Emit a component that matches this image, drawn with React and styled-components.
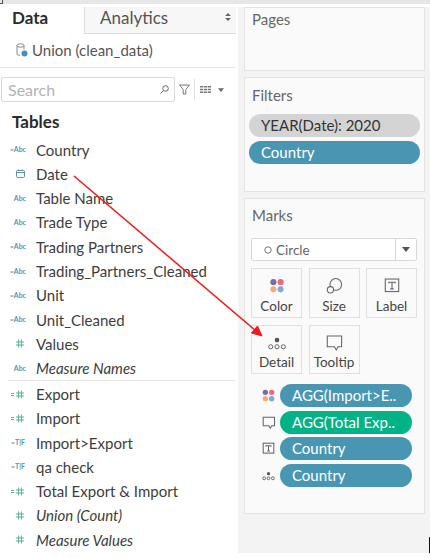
import React from "react";
import styled, { createGlobalStyle } from "styled-components";

const Global = createGlobalStyle`
  html, body { margin: 0; padding: 0; background: #fff; }
  * { box-sizing: border-box; }
`;

const Page = styled.div`
  position: relative;
  width: 430px;
  height: 558px;
  overflow: hidden;
  background: #fff;
  font-family: Lato, "Liberation Sans", sans-serif;
  color: #333;
`;
const TopStrip = styled.div`
  height: 4px;
  background: #e6e6e6;
  margin-bottom: 3px;
`;
const Corner = styled.div`
  position: absolute;
  left: 0;
  top: 0;
  width: 3px;
  height: 4px;
  border: solid #555;
  border-width: 0 1px 1px 0;
`;
const Main = styled.div`
  display: flex;
  height: 546px;
`;
const DataPane = styled.div`
  width: 236px;
  flex: none;
  display: flex;
  flex-direction: column;
  background: #fff;
`;
const Tabs = styled.div`
  display: flex;
  height: 27px;
  flex: none;
`;
const DataTab = styled.div`
  width: 84px;
  padding: 0 0 3px 12px;
  font-size: 17px;
  font-weight: 700;
  color: #2b2b2b;
  line-height: 22px;
`;
const AnalyticsTab = styled.div`
  flex: 1;
  position: relative;
  padding: 0 0 3px 15px;
  font-size: 17px;
  line-height: 22px;
  color: #555;
  background: #f7f7f7;
  border-left: 1px solid #dcdcdc;
  border-bottom: 1px solid #dcdcdc;
`;
const UpDown = styled.svg`
  position: absolute;
  right: 5px;
  top: 5px;
`;
const SourceRow = styled.div`
  height: 34px;
  flex: none;
  display: flex;
  align-items: center;
  padding: 0 0 2px 16px;
  gap: 4px;
  font-size: 15px;
  color: #555;
  border-bottom: 1px solid #e6e6e6;
`;
const SearchRow = styled.div`
  height: 34px;
  flex: none;
  display: flex;
  align-items: flex-start;
  padding: 9px 0 0 1px;
`;
const SearchBox = styled.div`
  width: 174px;
  height: 25px;
  border: 1px solid #d9d9d9;
  border-radius: 2px;
  display: flex;
  align-items: center;
  justify-content: space-between;
  padding: 0 5px 0 6px;
  font-size: 16px;
  color: #b3b3b3;
`;
const SearchTools = styled.div`
  display: flex;
  align-items: center;
  height: 25px;
  padding-left: 4px;
`;
const ToolDivider = styled.div`
  width: 1px;
  height: 21px;
  background: #e0e0e0;
  margin: 0 5px 0 4px;
`;
const Heading = styled.div`
  height: 35.4px;
  flex: none;
  padding: 9px 0 0 12px;
  font-size: 17px;
  line-height: 22px;
  font-weight: 700;
  color: #2b2b2b;
`;
const FieldGroup = styled.div`
  display: flex;
  flex-direction: column;
`;
const Row = styled.div`
  display: flex;
  align-items: center;
  height: 24.3px;
  font-size: 15px;
  font-style: ${(p) => (p.$italic ? "italic" : "normal")};
  color: #3d3d3d;
  white-space: nowrap;
`;
const IconSlot = styled.div`
  width: 36px;
  flex: none;
  display: flex;
  align-items: center;
  justify-content: flex-end;
  padding-right: 10px;
  font-style: normal;
`;
const TinyText = styled.span`
  font-size: ${(p) => p.$size || 7}px;
  font-weight: 700;
  line-height: 1;
  color: ${(p) => p.$color || "#5b93a8"};
  letter-spacing: 0;
`;
const Rule = styled.div`
  height: 1px;
  margin: 0 0 0.5px 8px;
  background: #e6e6e6;
`;
const ShelfPane = styled.div`
  width: 193px;
  flex: none;
  margin-left: 2px;
  background: #f3f3f3;
  display: flex;
  flex-direction: column;
  gap: 6px;
  padding-left: 6px;
`;
const Card = styled.section`
  width: 181px;
  height: ${(p) => p.$height}px;
  flex: none;
  background: #fafafa;
  border: 1px solid #e3e3e3;
  padding-top: ${(p) => p.$top}px;
  display: flex;
  flex-direction: column;
`;
const CardTitle = styled.div`
  font-size: 15px;
  line-height: 20px;
  color: #666;
  padding-left: 7px;
`;
const Pill = styled.div`
  height: 23px;
  flex: none;
  border-radius: 12px;
  background: ${(p) => p.$bg || "#4996b2"};
  color: ${(p) => p.$fg || "#fff"};
  font-size: 15px;
  line-height: 23px;
  padding-left: 12px;
  white-space: nowrap;
`;
const FilterPills = styled.div`
  display: flex;
  flex-direction: column;
  gap: 4px;
  padding: 9px 4px 0;
`;
const MarkSelect = styled.div`
  display: flex;
  align-items: center;
  height: 23px;
  margin: 13px 7px 0 6px;
  border: 1px solid #d9d9d9;
  border-radius: 2px;
  background: #fff;
  font-size: 13.5px;
  color: #666;
`;
const MarkType = styled.div`
  flex: 1;
  display: flex;
  align-items: center;
  gap: 4px;
  padding-left: 12px;
`;
const SelectCaret = styled.div`
  width: 21px;
  height: 100%;
  border-left: 1px solid #d9d9d9;
  display: flex;
  align-items: center;
  justify-content: center;
`;
const TileGrid = styled.div`
  display: grid;
  grid-template-columns: repeat(3, 1fr);
  grid-auto-rows: 49.5px;
  gap: 7px 6.5px;
  margin: 7px 7px 0 6px;
`;
const Tile = styled.div`
  background: #fafafa;
  border: 1px solid #e0e0e0;
  display: flex;
  flex-direction: column;
  align-items: center;
  justify-content: space-between;
  padding: 6px 0 2px;
  font-size: 13.5px;
  line-height: 18px;
  color: #444;
`;
const MarkPills = styled.div`
  display: flex;
  flex-direction: column;
  gap: 3.67px;
  margin-top: 10px;
  padding-left: 16px;
`;
const MarkRow = styled.div`
  display: flex;
  align-items: center;
  width: 151px;
`;
const MarkIconSlot = styled.div`
  width: 14px;
  height: 14px;
  margin-right: 5px;
  flex: none;
  display: flex;
  align-items: center;
  justify-content: center;
  svg { flex: none; }
`;
const WidePill = styled(Pill)`
  flex: 1;
`;
const BlackTick = styled.div`
  position: absolute;
  left: 429px;
  top: 537px;
  width: 1px;
  height: 16px;
  background: #111;
`;
const ArrowLayer = styled.svg`
  position: absolute;
  inset: 0;
  pointer-events: none;
`;

const Caret = ({ color = "#666", w = 8, h = 5 }) => (
  <svg width={w} height={h} viewBox="0 0 8 5"><path d="M0 0h8L4 5z" fill={color} /></svg>
);

const Hash = ({ color = "#56b396" }) => (
  <svg width="8" height="9" viewBox="0 0 8 9" fill="none" stroke={color} strokeWidth="1">
    <path d="M2.6 0.5v8M5.4 0.5v8M0 3h8M0 6h8" />
  </svg>
);

const Dots = () => (
  <svg width="4" height="5" viewBox="0 0 4 5" style={{ marginRight: 1 }} fill="#56b396">
    <rect x="0" y="1" width="3" height="1" />
    <rect x="0" y="3" width="3" height="1" />
  </svg>
);

const FieldIcon = ({ kind }) => {
  if (kind === "date")
    return (
      <svg width="9" height="9" viewBox="0 0 9 9" fill="none" stroke="#5b93a8" style={{ marginRight: 1 }}>
        <rect x="0.5" y="1.5" width="8" height="7" rx="1" />
        <path d="M0.5 3.5h8M2.5 0.5v1M6.5 0.5v1" />
      </svg>
    );
  if (kind === "hash") return <span style={{ marginRight: 2, display: "flex" }}><Hash /></span>;
  if (kind === "calcHash")
    return (
      <span style={{ marginRight: 2, display: "flex", alignItems: "center" }}>
        <Dots />
        <Hash />
      </span>
    );
  if (kind === "tf") return <TinyText $size={7} style={{ marginRight: 1 }}>=T|F</TinyText>;
  if (kind === "calcAbc") return <TinyText>=Abc</TinyText>;
  return <TinyText>Abc</TinyText>;
};

const fieldsTop = [
  ["Country", "calcAbc"],
  ["Date", "date"],
  ["Table Name", "abc"],
  ["Trade Type", "abc"],
  ["Trading Partners", "calcAbc"],
  ["Trading_Partners_Cleaned", "calcAbc"],
  ["Unit", "calcAbc"],
  ["Unit_Cleaned", "calcAbc"],
  ["Values", "hash"],
  ["Measure Names", "abc", true],
];
const fieldsBottom = [
  ["Export", "calcHash"],
  ["Import", "calcHash"],
  ["Import>Export", "tf"],
  ["qa check", "tf"],
  ["Total Export & Import", "calcHash"],
  ["Union (Count)", "hash", true],
  ["Measure Values", "hash", true],
];

const Field = ({ name, kind, italic }) => (
  <Row $italic={italic}>
    <IconSlot><FieldIcon kind={kind} /></IconSlot>
    {name}
  </Row>
);

const ColorIcon = ({ s = 24 }) => (
  <svg width={s} height={s} viewBox="0 0 24 24">
    <circle cx="8" cy="8" r="3.4" fill="#7d6b9f" />
    <circle cx="16" cy="8" r="3.4" fill="#f0687e" />
    <circle cx="8" cy="16" r="3.4" fill="#f3a97c" />
    <circle cx="16" cy="16" r="3.4" fill="#7fa9d6" />
  </svg>
);
const SizeIcon = ({ s = 24 }) => (
  <svg width={s} height={s} viewBox="0 0 24 24" fill="none" stroke="#666" strokeWidth="1.2">
    <circle cx="14" cy="10.5" r="6.5" />
    <circle cx="8" cy="16.5" r="3.5" fill="#fafafa" />
  </svg>
);
const LabelIcon = ({ s = 24, sw = 1.2 }) => (
  <svg width={s} height={s} viewBox="0 0 24 24" fill="none" stroke="#666" strokeWidth={sw}>
    <rect x="4.5" y="4.5" width="15" height="14" />
    <path d="M8.5 9.5v-1.5h7v1.5M12 8v7.5M10 15.5h4" />
  </svg>
);
const DetailIcon = ({ s = 24, sw = 1.1 }) => (
  <svg width={s} height={s} viewBox="0 0 24 24" fill="none" stroke="#666" strokeWidth={sw}>
    <circle cx="12" cy="9" r="2.6" fill="#555" stroke="none" />
    <circle cx="5" cy="16.5" r="2.3" />
    <circle cx="12" cy="16.5" r="2.3" />
    <circle cx="19" cy="16.5" r="2.3" />
  </svg>
);
const TooltipIcon = ({ s = 24, sw = 1.2 }) => (
  <svg width={s} height={s} viewBox="0 0 24 24" fill="none" stroke="#666" strokeWidth={sw}>
    <path d="M4.5 4.5h16v12h-4l-2 3.5-2-3.5h-8z" />
  </svg>
);

const tiles = [
  ["Color", <ColorIcon key="c" />],
  ["Size", <SizeIcon key="s" />],
  ["Label", <LabelIcon key="l" />],
  ["Detail", <DetailIcon key="d" />],
  ["Tooltip", <TooltipIcon key="t" />],
];

export default function App() {
  return (
    <Page>
      <Global />
      <TopStrip />
      <Corner />
      <Main>
        <DataPane>
          <Tabs>
            <DataTab>Data</DataTab>
            <AnalyticsTab>
              Analytics
              <UpDown width="6" height="10" viewBox="0 0 6 10">
                <path d="M0 4l3-3 3 3zM0 6l3 3 3-3z" fill="#666" />
              </UpDown>
            </AnalyticsTab>
          </Tabs>
          <SourceRow>
            <svg width="12" height="14" viewBox="0 0 12 14" fill="none" stroke="#888">
              <path d="M1 2.5v8.5c0 .8 1.4 1.3 3 1.4M8 2.5v4" />
              <ellipse cx="4.5" cy="2.5" rx="3.5" ry="1.7" />
              <circle cx="8.5" cy="10.5" r="3" fill="#3f8fc0" stroke="none" />
            </svg>
            Union (clean_data)
          </SourceRow>
          <SearchRow>
            <SearchBox>
              Search
              <svg width="9" height="9" viewBox="0 0 9 9" fill="none" stroke="#666">
                <circle cx="5.5" cy="3.5" r="2.8" />
                <path d="M3.4 5.6L.5 8.5" />
              </svg>
            </SearchBox>
            <SearchTools>
              <svg width="11" height="11" viewBox="0 0 11 11" fill="none" stroke="#777">
                <path d="M.5 1h10L6.8 5.5V10H4.2V5.5z" />
              </svg>
              <ToolDivider />
              <svg width="11" height="7" viewBox="0 0 11 7" fill="#777">
                <path d="M0 0h11v1.4H0zM0 2.8h11v1.4H0zM0 5.6h11V7H0z" />
                <path d="M3.3 0h.7v7h-.7zM7 0h.7v7H7z" fill="#fff" />
              </svg>
              <span style={{ width: 7 }} />
              <Caret w={6} h={4} />
            </SearchTools>
          </SearchRow>
          <Heading>Tables</Heading>
          <FieldGroup>
            {fieldsTop.map(([n, k, i]) => <Field key={n} name={n} kind={k} italic={i} />)}
          </FieldGroup>
          <FieldGroup>
            <Rule />
            {fieldsBottom.map(([n, k, i]) => <Field key={n} name={n} kind={k} italic={i} />)}
          </FieldGroup>
        </DataPane>
        <ShelfPane>
          <Card $height={64} $top={1}>
            <CardTitle>Pages</CardTitle>
          </Card>
          <Card $height={115} $top={7}>
            <CardTitle>Filters</CardTitle>
            <FilterPills>
              <Pill $bg="#d4d4d4" $fg="#333">YEAR(Date): 2020</Pill>
              <Pill>Country</Pill>
            </FilterPills>
          </Card>
          <Card $height={316} $top={6}>
            <CardTitle>Marks</CardTitle>
            <MarkSelect>
              <MarkType>
                <svg width="8" height="8" viewBox="0 0 8 8" fill="none" stroke="#777">
                  <circle cx="4" cy="4" r="3.2" />
                </svg>
                Circle
              </MarkType>
              <SelectCaret><Caret color="#555" /></SelectCaret>
            </MarkSelect>
            <TileGrid>
              {tiles.map(([label, icon]) => (
                <Tile key={label}>
                  {icon}
                  {label}
                </Tile>
              ))}
            </TileGrid>
            <MarkPills>
              <MarkRow>
                <MarkIconSlot><ColorIcon s={19} /></MarkIconSlot>
                <WidePill>AGG(Import&gt;E..</WidePill>
              </MarkRow>
              <MarkRow>
                <MarkIconSlot><TooltipIcon s={17} sw={1.5} /></MarkIconSlot>
                <WidePill $bg="#00b386">AGG(Total Exp..</WidePill>
              </MarkRow>
              <MarkRow>
                <MarkIconSlot><LabelIcon s={17} sw={1.5} /></MarkIconSlot>
                <WidePill>Country</WidePill>
              </MarkRow>
              <MarkRow>
                <MarkIconSlot><DetailIcon s={15} sw={1.5} /></MarkIconSlot>
                <WidePill>Country</WidePill>
              </MarkRow>
            </MarkPills>
          </Card>
        </ShelfPane>
      </Main>
      <BlackTick />
      <ArrowLayer width="430" height="558" viewBox="0 0 430 558">
        <path d="M74 176L256 331" stroke="#f01818" strokeWidth="1.5" fill="none" />
        <path d="M262 336L251.5 333L257.5 326z" fill="#f01818" stroke="#f01818" strokeWidth="1" />
      </ArrowLayer>
    </Page>
  );
}
